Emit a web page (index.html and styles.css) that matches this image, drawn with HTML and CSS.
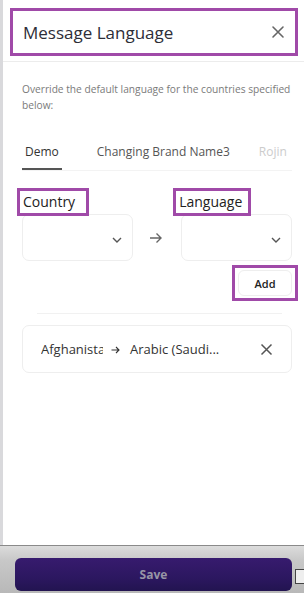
FILE: index.html
```html
<!DOCTYPE html>
<html lang="en">
<head>
  <meta charset="UTF-8">
  <meta name="viewport" content="width=device-width, initial-scale=1.0">
  <title>Message Language</title>
  <link rel="stylesheet" href="styles.css">
</head>
<body>
<div class="drawer">
  <div class="header">
    <h2>Message Language</h2>
    <svg class="close" width="14" height="14" viewBox="0 0 14 14"><path d="M2 2 L12 12 M12 2 L2 12" stroke="#666" stroke-width="1.6" stroke-linecap="round"/></svg>
  </div>
  <div class="body">
    <p class="hint">Override the default language for the countries specified below:</p>
    <div class="tabs">
      <span class="tab active">Demo</span>
      <span class="tab">Changing Brand Name3</span>
      <span class="tab faded">Rojin</span>
    </div>
    <div class="labels">
      <span class="label">Country</span>
      <span class="label lang">Language</span>
    </div>
    <div class="selects">
      <div class="select">
        <svg width="12" height="8" viewBox="0 0 12 8"><path d="M2 2 L6 6 L10 2" fill="none" stroke="#555" stroke-width="1.4"/></svg>
      </div>
      <svg class="arrow" width="14" height="12" viewBox="0 0 14 12"><path d="M1 6 H12 M7.5 1.5 L12 6 L7.5 10.5" fill="none" stroke="#666" stroke-width="1.4"/></svg>
      <div class="select">
        <svg width="12" height="8" viewBox="0 0 12 8"><path d="M2 2 L6 6 L10 2" fill="none" stroke="#555" stroke-width="1.4"/></svg>
      </div>
    </div>
    <div class="add-row">
      <div class="add-box"><button class="add">Add</button></div>
    </div>
    <div class="divider"></div>
    <div class="rule">
      <span class="country">Afghanistan</span>
      <svg class="to" width="9" height="8" viewBox="0 0 9 8"><path d="M0.5 4 H8 M5 1 L8 4 L5 7" fill="none" stroke="#333" stroke-width="1.1"/></svg>
      <span class="language">Arabic (Saudi...</span>
      <svg class="remove" width="13" height="13" viewBox="0 0 13 13"><path d="M1.5 1.5 L11.5 11.5 M11.5 1.5 L1.5 11.5" stroke="#555" stroke-width="1.5"/></svg>
    </div>
  </div>
  <div class="footer">
    <button class="save">Save</button>
    <span class="corner"></span>
  </div>
</div>
</body>
</html>
```
FILE: styles.css
```css
html, body {
  margin: 0;
  height: 100%;
}
body {
  font-family: "Open Sans", "Noto Sans", sans-serif;
  background: #fff;
  color: #2e2e38;
}
.drawer {
  height: 100%;
  display: flex;
  flex-direction: column;
  border-left: 3px solid #d9d9dc;
  box-sizing: border-box;
}
.header {
  margin: 8px 6px 0 7px;
  height: 48px;
  border: 3px solid #a04aa8;
  box-sizing: border-box;
  display: flex;
  align-items: center;
  justify-content: space-between;
  padding: 0 10px;
}
.header h2 {
  margin: 0;
  font-size: 17px;
  font-weight: 500;
  color: #2d2d38;
}
.body {
  flex: 1;
  border-top: 1px solid #ececec;
  margin-top: 5px;
  padding: 0 8px 0 19px;
}
.hint {
  margin: 19px 0 0;
  font-size: 10.2px;
  line-height: 16px;
  color: #7a7a7a;
}
.tabs {
  display: flex;
  margin-top: 30px;
  font-size: 12px;
  border-bottom: 1px solid #f3f3f3;
  margin-right: 4px;
}
.tab {
  padding: 0 0 9px;
  color: #555;
  margin-right: 29px;
  white-space: nowrap;
}
.tab.active {
  color: #333;
  border-bottom: 2px solid #555;
  padding: 0 3px 8px;
  margin-right: 35px;
}
.tab.faded {
  color: #ccc;
  margin-right: 0;
}
.labels {
  display: flex;
  margin-top: 17px;
  margin-left: -5px;
  margin-bottom: -2px;
  position: relative;
}
.label {
  border: 3px solid #a04aa8;
  font-size: 14px;
  line-height: 22px;
  padding: 0 11px 0 3px;
  color: #222;
}
.label.lang {
  margin-left: 84px;
  padding-right: 6px;
}
.selects {
  display: flex;
  align-items: center;
}
.select {
  width: 111px;
  height: 47px;
  border: 1px solid #eee;
  border-radius: 7px;
  box-sizing: border-box;
  display: flex;
  align-items: center;
  justify-content: flex-end;
  padding: 4px 9px 0 0;
}
.arrow {
  margin: 0 18px 0 16px;
}
.add-row {
  display: flex;
  justify-content: flex-end;
  margin-top: 4px;
  margin-right: -2px;
}
.add-box {
  border: 3px solid #a04aa8;
  padding: 2px 3px;
}
.add {
  width: 54px;
  height: 26px;
  border: 1px solid #eee;
  border-radius: 6px;
  background: #fff;
  font-family: inherit;
  font-size: 11px;
  font-weight: 600;
  color: #222;
}
.divider {
  height: 1px;
  background: #f1f1f1;
  margin: 12px 14px 0 15px;
}
.rule {
  margin-top: 11px;
  height: 48px;
  width: 270px;
  border: 1px solid #eee;
  border-radius: 7px;
  box-sizing: border-box;
  display: flex;
  align-items: center;
  padding: 0 18px;
  font-size: 13px;
  color: #333;
}
.country {
  width: 62px;
  overflow: hidden;
  white-space: nowrap;
}
.to {
  margin: 1px 10px 0 8px;
}
.language {
  flex: 1;
}
.footer {
  height: 48px;
  border-top: 1px solid #8a8a8a;
  background: linear-gradient(#dcdcdc, #c8c8c8 30%, #b8b8b8);
  position: relative;
  padding: 12px 11px 2px 15px;
  box-sizing: border-box;
  margin-left: -3px;
}
.save {
  display: block;
  width: 277px;
  height: 33px;
  border: none;
  border-radius: 6px;
  background: linear-gradient(#371b6e, #2c1760 60%, #221450);
  color: #9795a6;
  font-family: inherit;
  font-size: 12px;
  font-weight: 700;
}
.corner {
  position: absolute;
  right: 0;
  top: 23px;
  width: 8px;
  height: 13px;
  border: 1px solid #444;
  border-right: none;
  background: #eee;
}
```
